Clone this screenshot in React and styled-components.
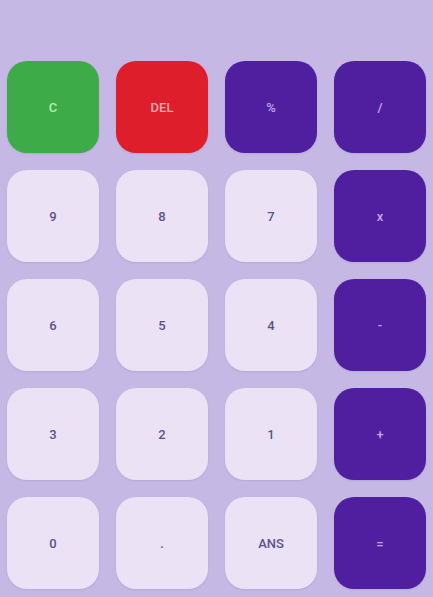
import React from "react";
import styled, { createGlobalStyle } from "styled-components";

const Global = createGlobalStyle`
  html, body { margin: 0; padding: 0; background: #c5b8e4; }
  body { font-family: Roboto, "Noto Sans", sans-serif; }
`;

const Page = styled.div`
  width: 433px;
  height: 597px;
  box-sizing: border-box;
  padding: 61px 8px 0 7px;
  background: #c5b8e4;
`;

const Grid = styled.div`
  display: grid;
  grid-template-columns: repeat(4, 92px);
  grid-auto-rows: 92px;
  column-gap: 17px;
  row-gap: 17px;
`;

const palette = {
  clear: { bg: "#3dab48", fg: "#b9efb4" },
  del: { bg: "#de1f2b", fg: "#f6a9ad" },
  op: { bg: "#4f1f9f", fg: "#c3a8ee" },
  num: { bg: "#ebe2f5", fg: "#5e5090" },
};

const Key = styled.button`
  border: none;
  border-radius: 20px;
  background: ${(p) => palette[p.$kind].bg};
  color: ${(p) => palette[p.$kind].fg};
  font-family: Roboto, "Noto Sans", sans-serif;
  font-size: 13px;
  font-weight: 500;
  display: flex;
  align-items: center;
  justify-content: center;
  padding: 0;
  box-shadow: 0 1px 2px rgba(80, 50, 130, 0.12);
`;

const keys = [
  ["C", "clear"], ["DEL", "del"], ["%", "op"], ["/", "op"],
  ["9", "num"], ["8", "num"], ["7", "num"], ["x", "op"],
  ["6", "num"], ["5", "num"], ["4", "num"], ["-", "op"],
  ["3", "num"], ["2", "num"], ["1", "num"], ["+", "op"],
  ["0", "num"], [".", "num"], ["ANS", "num"], ["=", "op"],
];

export default function App() {
  return (
    <>
      <Global />
      <Page>
        <Grid>
          {keys.map(([label, kind]) => (
            <Key key={label} $kind={kind}>{label}</Key>
          ))}
        </Grid>
      </Page>
    </>
  );
}
